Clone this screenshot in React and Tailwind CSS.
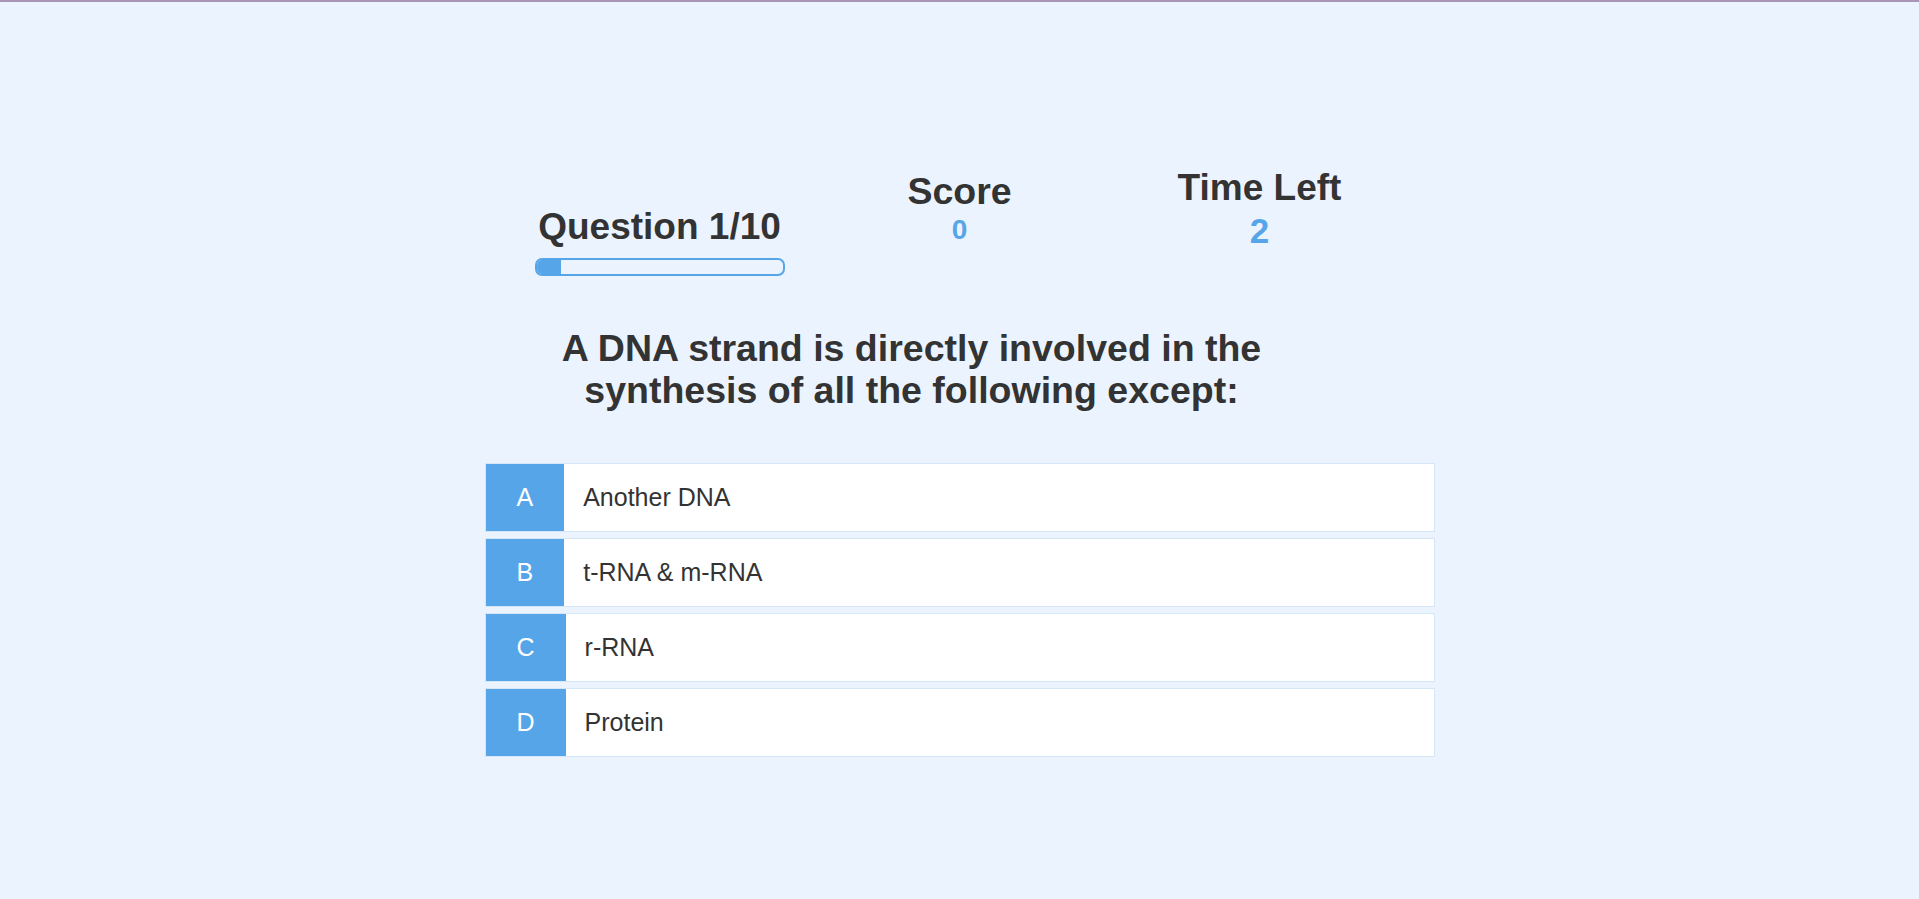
import { useState } from 'react';

const options = [
  { key: 'A', text: 'Another DNA' },
  { key: 'B', text: 't-RNA & m-RNA' },
  { key: 'C', text: 'r-RNA' },
  { key: 'D', text: 'Protein' },
];

const App = () => {
  const [current] = useState(1);
  const [score] = useState(0);
  const [timeLeft] = useState(2);
  const total = 10;

  return (
    <div className="min-h-screen bg-[#ebf3fe] border-t-2 border-[#a996b6] font-['Liberation_Sans',Arial,sans-serif] text-[#333]">
      <div className="w-[950px] mx-auto pt-[164px]">
        <div className="grid grid-cols-3 w-[900px] mx-auto items-start">
          <div className="pt-[40px] flex flex-col items-center">
            <h2 className="text-[37px] leading-[42px] font-bold">
              Question {current}/{total}
            </h2>
            <div className="mt-[10px] w-[250px] h-[18px] border-2 border-[#56a5e8] rounded-[7px] overflow-hidden">
              <div className="h-full bg-[#56a5e8]" style={{ width: `${(current / total) * 100}%` }} />
            </div>
          </div>

          <div className="pt-[4px] flex flex-col items-center">
            <h2 className="text-[37.5px] leading-[42px] font-bold">Score</h2>
            <span className="mt-[2px] text-[28px] leading-[32px] font-bold text-[#56a5e8]">{score}</span>
          </div>

          <div className="pt-[1px] flex flex-col items-center">
            <h2 className="text-[37px] leading-[42px] font-bold">Time Left</h2>
            <span className="mt-[2px] text-[35px] leading-[40px] font-bold text-[#56a5e8]">{timeLeft}</span>
          </div>
        </div>

        <h1 className="mt-[51px] ml-[57px] w-[740px] text-center text-[37.5px] leading-[42px] font-bold">
          A DNA strand is directly involved in the synthesis of all the following except:
        </h1>

        <div className="mt-[52px] flex flex-col gap-[6px]">
          {options.map((option) => (
            <button
              key={option.key}
              className="flex h-[69px] w-full bg-white border border-[#d4e6f7] text-left cursor-pointer"
            >
              <span className="h-full flex items-center px-[31px] bg-[#56a5e8] text-white text-[25px]">
                {option.key}
              </span>
              <span className="h-full flex items-center pl-[19px] text-[25px]">{option.text}</span>
            </button>
          ))}
        </div>
      </div>
    </div>
  );
};

export default App;
